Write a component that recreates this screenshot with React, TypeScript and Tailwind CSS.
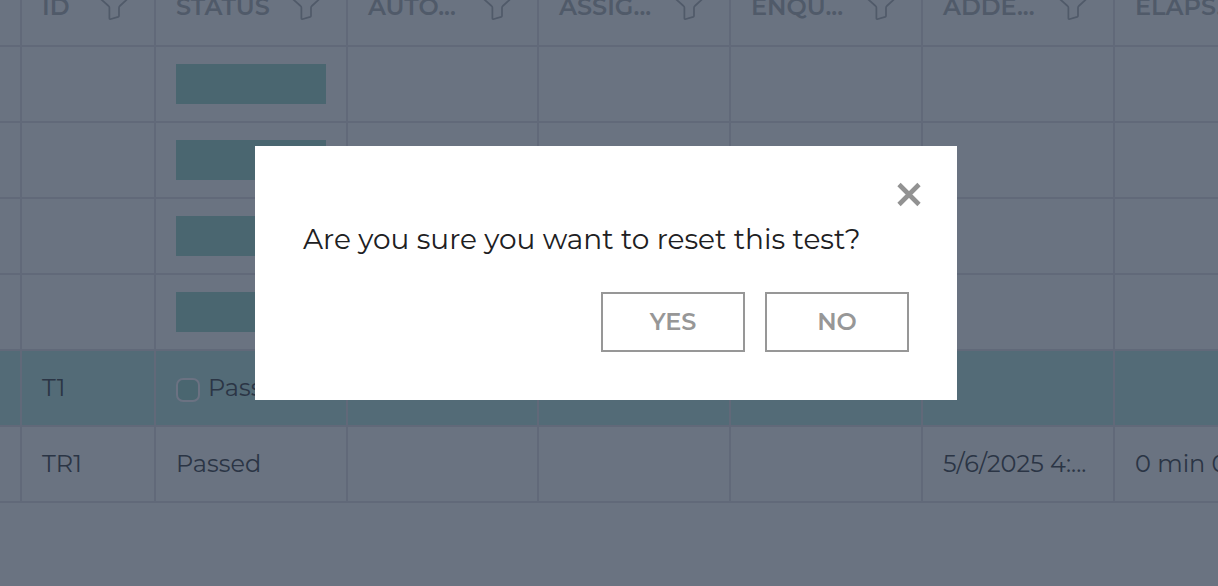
import React from "react";

const headings = ["ID", "STATUS", "AUTO...", "ASSIG...", "ENQU...", "ADDE...", "ELAPS..."];

type Row = { cells: string[]; bar?: boolean; selected?: boolean };

const rows: Row[] = [
  { cells: ["", "", "", "", "", "", ""], bar: true },
  { cells: ["", "", "", "", "", "", ""], bar: true },
  { cells: ["", "", "", "", "", "", ""], bar: true },
  { cells: ["", "", "", "", "", "", ""], bar: true },
  { cells: ["T1", "Passed", "", "", "", "", ""], selected: true },
  { cells: ["TR1", "Passed", "", "", "", "5/6/2025 4:...", "0 min 0 sec"] },
];

function FilterIcon() {
  return (
    <svg
      viewBox="0 0 28 28"
      className="size-7 shrink-0"
      fill="none"
      stroke="currentColor"
      strokeWidth="1.7"
      strokeLinejoin="round"
      aria-hidden="true"
    >
      <path d="M1 1H27V6.4L19.8 13Q19 13.8 19 14.8V22.8Q19 23.6 18.2 23.9L11 26Q9.4 26.4 9.4 25.2V14.8Q9.4 13.8 8.6 13L1 6.2Z" />
    </svg>
  );
}

function ResultsTable() {
  return (
    <table className="-mt-8 w-[1307px] table-fixed border-separate border-spacing-0 text-left text-[#2b3545]">
      <colgroup>
        <col className="w-[22px]" />
        <col className="w-[134px]" />
        <col className="w-[192px]" />
        <col className="w-[191px]" />
        <col className="w-[192px]" />
        <col className="w-[192px]" />
        <col className="w-[192px]" />
        <col className="w-[192px]" />
      </colgroup>
      <thead>
        <tr className="h-[79px]">
          <th className="border-r-2 border-b-2 border-[#616979] p-0" />
          {headings.map((label) => (
            <th
              key={label}
              className="border-r-2 border-b-2 border-[#616979] py-0 pr-[26px] pl-5 text-[24px] leading-8 font-semibold whitespace-nowrap text-[#505a69]"
            >
              <div className="flex items-center justify-between">
                <span>{label}</span>
                <FilterIcon />
              </div>
            </th>
          ))}
        </tr>
      </thead>
      <tbody>
        {rows.map((row, i) => (
          <tr key={i} className={row.selected ? "h-[76px] bg-[#536b77]" : "h-[76px]"}>
            <td className="border-r-2 border-b-2 border-[#616979] p-0" />
            {row.cells.map((text, c) => (
              <td
                key={c}
                className="overflow-hidden border-r-2 border-b-2 border-[#616979] px-5 py-0 text-[24px] leading-8 whitespace-nowrap"
              >
                {c === 1 && row.bar ? (
                  <div className="h-10 bg-[#4a6670]" />
                ) : c === 1 && row.selected ? (
                  <div className="flex items-center gap-2">
                    <span className="mt-1 size-6 shrink-0 rounded-[7px] border-2 border-[#6b7282] bg-[#4a6670]" />
                    <span>{text}</span>
                  </div>
                ) : (
                  text
                )}
              </td>
            ))}
          </tr>
        ))}
      </tbody>
    </table>
  );
}

function ConfirmDialog() {
  return (
    <div className="fixed inset-0 flex items-center justify-center pr-1.5 pb-10">
      <div
        role="dialog"
        aria-modal="true"
        aria-labelledby="confirm-message"
        className="flex w-full max-w-[702px] flex-col bg-white px-12 pt-8 pb-12"
      >
        <button
          type="button"
          aria-label="Close"
          className="-mr-4 flex size-8 items-center justify-center self-end text-[#929292]"
        >
          <svg viewBox="0 0 32 32" className="size-8" fill="none" stroke="currentColor" strokeWidth="4.6">
            <path d="M6 6.5L26 26.5M26 6.5L6 26.5" />
          </svg>
        </button>
        <p id="confirm-message" className="mt-3 text-[28px] leading-[34px] text-[#202022]">
          Are you sure you want to reset this test?
        </p>
        <div className="mt-9 flex justify-end gap-5">
          {["YES", "NO"].map((label) => (
            <button
              key={label}
              type="button"
              className="h-[60px] w-36 border-2 border-[#979797] text-[24px] leading-8 font-semibold text-[#979797]"
            >
              {label}
            </button>
          ))}
        </div>
      </div>
    </div>
  );
}

export default function App() {
  return (
    <main className="h-screen overflow-hidden bg-[#6a7381] font-[Montserrat,Inter,sans-serif]">
      <div className="flow-root overflow-hidden">
        <ResultsTable />
      </div>
      <ConfirmDialog />
    </main>
  );
}
